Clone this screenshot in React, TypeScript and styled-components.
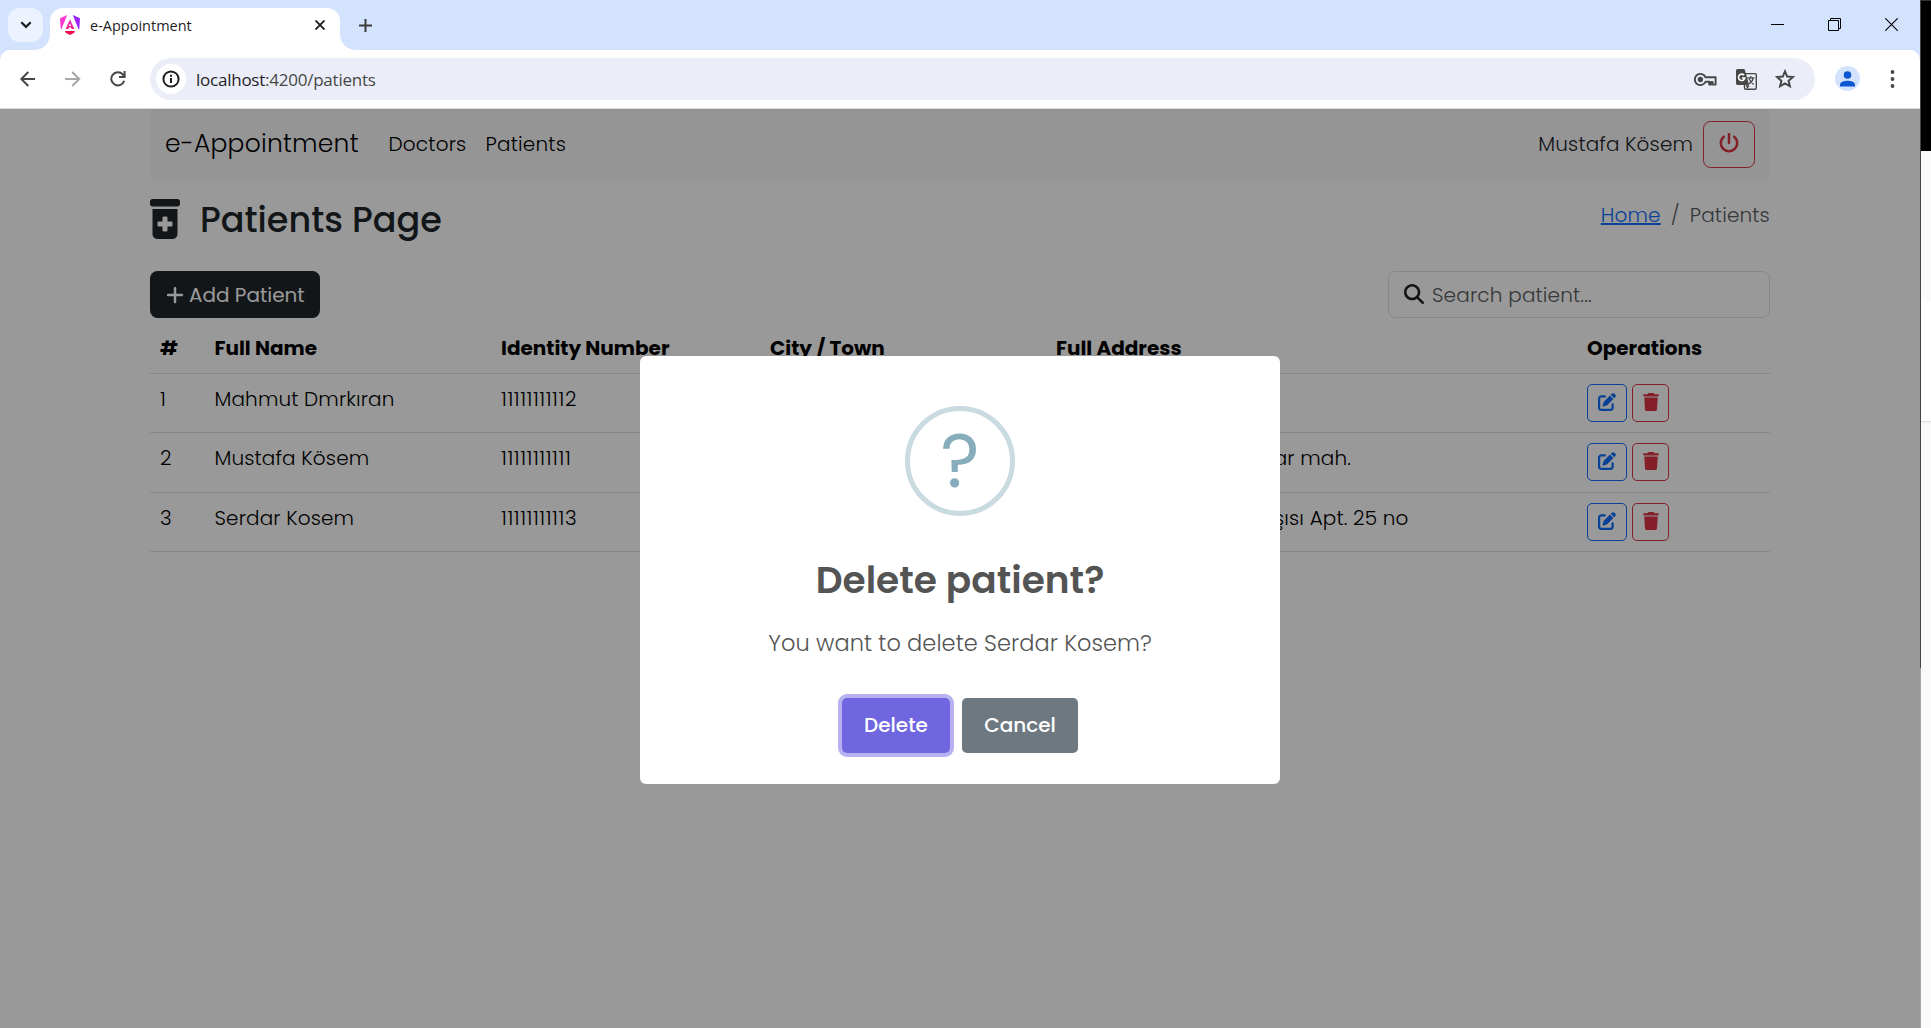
import React from 'react';
import styled, { createGlobalStyle } from 'styled-components';
import {
  FaMagnifyingGlass,
  FaPenToSquare,
  FaPlus,
  FaPowerOff,
  FaPrescriptionBottleMedical,
  FaTrash,
} from 'react-icons/fa6';

const GlobalStyle = createGlobalStyle`
  *, *::before, *::after { box-sizing: border-box; }
  body {
    margin: 0;
    overflow: hidden;
    font-family: Poppins, "Open Sans", sans-serif;
    font-size: 20px;
    font-weight: 300;
    line-height: 30px;
    color: #212529;
  }
`;

const Desktop = styled.div`
  display: flex;
  width: 1931px;
  height: 1028px;
  overflow: hidden;
  background: #fff;
`;

const Browser = styled.div`
  display: flex;
  flex-direction: column;
  width: 1920px;
  height: 100%;
`;

/* Window edge and the sliver of the window behind it */
const WindowEdge = styled.div`
  width: 1px;
  background: linear-gradient(#444 668px, #a4a4a4 668px);
`;
const Behind = styled.div`
  display: flex;
  flex-direction: column;
  width: 10px;
`;
const Strip = styled.div<{ $h?: number; $bg: string }>`
  ${(p) => (p.$h ? `height: ${p.$h}px;` : 'flex: 1;')}
  background: ${(p) => p.$bg};
`;

/* Tab strip */
const TabStrip = styled.div`
  display: flex;
  align-items: flex-start;
  height: 50px;
  padding-top: 8px;
  background: #d3e3fd;
`;
const TabSearch = styled.div`
  display: grid;
  place-items: center;
  width: 35px;
  height: 34px;
  margin-left: 8px;
  border-radius: 12px;
  background: #ecf3fe;
`;
const Tab = styled.div`
  position: relative;
  display: flex;
  align-items: center;
  width: 290px;
  height: 42px;
  margin-left: 7px;
  padding: 0 15px 8px 10px;
  border-radius: 13px 13px 0 0;
  background: #fff;
  &::before,
  &::after {
    content: '';
    position: absolute;
    bottom: 0;
    width: 15px;
    height: 15px;
  }
  &::before {
    left: -15px;
    background: radial-gradient(circle at 0 0, transparent 14.5px, #fff 15px);
  }
  &::after {
    right: -15px;
    background: radial-gradient(circle at 100% 0, transparent 14.5px, #fff 15px);
  }
`;
const TabTitle = styled.span`
  flex: 1;
  margin-left: 10px;
  padding-top: 1px;
  font: 400 14.5px/20px 'Open Sans', sans-serif;
  color: #1f1f1f;
`;
const NewTab = styled.div`
  display: grid;
  place-items: center;
  width: 20px;
  height: 34px;
  margin-left: 15px;
`;
const WindowControls = styled.div`
  display: flex;
  align-items: center;
  gap: 44px;
  height: 33px;
  margin-left: auto;
  padding-right: 22px;
`;

/* Address bar */
const ToolbarWrap = styled.div`
  height: 59px;
  background: #d3e3fd;
`;
const Toolbar = styled.div`
  display: flex;
  align-items: flex-start;
  height: 59px;
  padding: 8px 21px 0 20px;
  border-bottom: 1px solid #dadcdb;
  border-radius: 10px 10px 0 0;
  background: #fff;
`;
const NavIcons = styled.div`
  display: flex;
  align-items: center;
  gap: 29px;
  height: 42px;
  width: 130px;
`;
const Omnibox = styled.div`
  display: flex;
  align-items: center;
  width: 1665px;
  height: 42px;
  padding: 0 20px 0 6px;
  border-radius: 21px;
  background: #ebeef8;
`;
const SiteInfo = styled.div`
  display: grid;
  place-items: center;
  width: 30px;
  height: 30px;
  border-radius: 50%;
  background: #fff;
`;
const Url = styled.span`
  flex: 1;
  margin-left: 10px;
  padding-top: 1px;
  font: 400 17px/24px 'Open Sans', sans-serif;
  letter-spacing: -0.24px;
  color: #474747;
  b {
    font-weight: 400;
    color: #1f1f1f;
  }
`;
const OmniIcons = styled.div`
  display: flex;
  align-items: center;
  gap: 18.5px;
`;
const Profile = styled.div`
  display: grid;
  place-items: center;
  width: 25px;
  height: 25px;
  margin: 8px 0 0 20px;
  border-radius: 50%;
  background: #d3e3fd;
`;
const MenuDots = styled.div`
  display: flex;
  height: 42px;
  align-items: center;
  margin-left: auto;
`;

/* Page */
const Page = styled.main`
  position: relative;
  flex: 1;
  padding: 0 150px;
  background: #fff;
`;
const Navbar = styled.nav`
  display: flex;
  align-items: center;
  height: 70px;
  padding: 0 15px;
  background: #f8f9fa;
  color: #000;
`;
const Brand = styled.span`
  width: 223.5px;
  font-size: 25px;
  line-height: 36px;
  letter-spacing: 0.22px;
`;
const NavLink = styled.span`
  margin-right: 19px;
  letter-spacing: 0.2px;
`;
const UserName = styled.span`
  margin: 0 10px 0 auto;
  letter-spacing: 0.12px;
  color: #212529;
`;
const OutlineButton = styled.button<{ $color: string; $w: number; $small?: boolean }>`
  display: inline-flex;
  align-items: center;
  justify-content: center;
  width: ${(p) => p.$w}px;
  height: ${(p) => (p.$small ? 38 : 47)}px;
  padding: ${(p) => (p.$small ? '0 0 2px' : '0 0 2px')};
  border: 1px solid ${(p) => p.$color};
  border-radius: ${(p) => (p.$small ? 5 : 7.5)}px;
  background: transparent;
  color: ${(p) => p.$color};
  font-size: ${(p) => (p.$small ? 18 : 20)}px;
`;
const Heading = styled.div`
  display: flex;
  justify-content: space-between;
  margin-top: 19px;
  height: 73px;
`;
const Title = styled.h1`
  display: flex;
  gap: 20px;
  margin: 0;
  padding-top: 1px;
  font-size: 35px;
  font-weight: 500;
  line-height: 42px;
  svg {
    width: 30px;
    height: 40px;
  }
`;
const Breadcrumb = styled.div`
  display: flex;
  gap: 10px;
  margin-top: 2px;
  letter-spacing: 0.17px;
  color: #595c5f;
  a {
    color: #0d6efd;
    text-decoration: underline;
  }
`;
const Actions = styled.div`
  display: flex;
  justify-content: space-between;
  height: 47px;
  margin-bottom: 5px;
`;
const AddButton = styled.button`
  display: flex;
  align-items: center;
  gap: 4px;
  width: 170px;
  padding: 0 0 0 15px;
  border: 0;
  border-radius: 7.5px;
  background: #212529;
  color: #fff;
  font: 400 20px/30px Poppins, sans-serif;
`;
const SearchBox = styled.div`
  display: flex;
  align-items: center;
  gap: 8px;
  width: 382px;
  padding-left: 15px;
  border: 1px solid #dee2e6;
  border-radius: 7.5px;
  color: #595c5f;
  letter-spacing: 0.17px;
  svg {
    margin-bottom: 2px;
    color: #212529;
  }
`;
const Table = styled.table`
  width: 100%;
  table-layout: fixed;
  border-collapse: separate;
  border-spacing: 0;
  color: #000;
`;
const Th = styled.th<{ $w: number }>`
  width: ${(p) => p.$w}px;
  height: 51px;
  padding: 10px 10px 9px;
  border-bottom: 1px solid #dee2e6;
  text-align: left;
  vertical-align: top;
  font-weight: 700;
`;
const Tr = styled.tr<{ $h: number }>`
  height: ${(p) => p.$h}px;
`;
const Td = styled.td<{ $spacing?: number }>`
  padding: 10px 0 0 10px;
  border-bottom: 1px solid #dee2e6;
  vertical-align: top;
  letter-spacing: ${(p) => p.$spacing ?? 0.13}px;
  white-space: nowrap;
`;
const AddressEnd = styled.span<{ $width: number }>`
  display: block;
  width: ${(p) => p.$width}px;
  text-align: right;
`;
const RowButtons = styled.div`
  display: flex;
  gap: 5px;
`;

/* Confirmation dialog */
const Overlay = styled.div`
  position: absolute;
  inset: 0;
  display: flex;
  align-items: center;
  justify-content: center;
  padding-top: 3px;
  background: rgba(0, 0, 0, 0.4);
`;
const Dialog = styled.div`
  display: flex;
  flex-direction: column;
  align-items: center;
  width: 640px;
  height: 428px;
  padding-top: 50px;
  border-radius: 6px;
  background: #fff;
  color: #545454;
`;
const QuestionIcon = styled.div`
  display: flex;
  align-items: center;
  justify-content: center;
  width: 110px;
  height: 110px;
  border: 5px solid #c9dae1;
  border-radius: 50%;
  color: #87adbd;
  font-size: 75px;
  font-weight: 400;
  line-height: 100px;
`;
const DialogTitle = styled.h2`
  margin: 36px 0 0;
  font-size: 37.5px;
  font-weight: 600;
  line-height: 56px;
`;
const DialogText = styled.p`
  margin: 18px 0 38px;
  font-size: 22.5px;
  line-height: 34px;
  letter-spacing: 0.06px;
`;
const DialogButtons = styled.div`
  display: flex;
  gap: 12px;
`;
const DialogButton = styled.button<{ $bg: string; $w: number; $focus?: boolean }>`
  width: ${(p) => p.$w}px;
  height: 55px;
  padding: 0 0 2px;
  border: 0;
  border-radius: 5px;
  background: ${(p) => p.$bg};
  color: #fff;
  font: 500 20px/30px Poppins, sans-serif;
  box-shadow: ${(p) => (p.$focus ? '0 0 0 4px #b7b2ef' : 'none')};
`;

const AngularLogo = () => (
  <svg width="20" height="20" viewBox="0 0 20 20">
    <defs>
      <linearGradient id="ng" x1="0" y1="0" x2="0" y2="1">
        <stop offset="0" stopColor="#e22ad0" />
        <stop offset="1" stopColor="#f5207c" />
      </linearGradient>
    </defs>
    <path d="M0 3.2 7.2 0 1.4 14.2.7 14z" fill="#f938d3" />
    <path d="M20 3.2 12.8 0l5.800 14.200.7-.2z" fill="#9a22fa" />
    <path d="M10 4.200 14.300 14h-2.600l-.6-1.600H8.900L8.300 14H5.700zM10 8.400 8.900 11h2.200z" fill="url(#ng)" />
    <path d="M5 16h10l-.6 1.800L10 20l-4.400-2.200z" fill="#f40b4e" />
  </svg>
);

const patients = [
  { id: 1, name: 'Mahmut Dmrkıran', identity: '11111111112', address: '', width: 0, h: 59 },
  { id: 2, name: 'Mustafa Kösem', identity: '11111111111', address: 'ar mah.', width: 295, h: 60 },
  { id: 3, name: 'Serdar Kosem', identity: '11111111113', address: 'şısı Apt. 25 no', width: 352.5, h: 59 },
];

export default function App() {
  return (
    <Desktop>
      <GlobalStyle />
      <Browser>
        <TabStrip>
          <TabSearch>
            <svg width="12" height="8" viewBox="0 0 12 8" fill="none" stroke="#1f1f1f" strokeWidth="2.2">
              <path d="m1.3 1.3 4.7 4.6 4.7-4.6" />
            </svg>
          </TabSearch>
          <Tab>
            <AngularLogo />
            <TabTitle>e-Appointment</TabTitle>
            <svg width="10" height="10" viewBox="0 0 10 10" stroke="#1f1f1f" strokeWidth="1.9">
              <path d="m.5.5 9 9M9.5.5l-9 9" />
            </svg>
          </Tab>
          <NewTab>
            <svg width="13" height="13" viewBox="0 0 13 13" stroke="#3c3c3c" strokeWidth="2">
              <path d="M6.5 0v13M0 6.5h13" />
            </svg>
          </NewTab>
          <WindowControls>
            <svg width="13" height="13" viewBox="0 0 13 13" stroke="#000">
              <path d="M0 6.5h13" />
            </svg>
            <svg width="13" height="13" viewBox="0 0 13 13" fill="none" stroke="#000">
              <path d="M.5 2.500h10v10H.5zM2.500 2.500v-2h10v10h-2" />
            </svg>
            <svg width="13" height="13" viewBox="0 0 13 13" stroke="#000" strokeWidth="1.1">
              <path d="m.2.2 12.600 12.600M12.800.2.2 12.800" />
            </svg>
          </WindowControls>
        </TabStrip>

        <ToolbarWrap>
          <Toolbar>
            <NavIcons>
              <svg width="16" height="16" viewBox="0 0 16 16" fill="none" stroke="#474747" strokeWidth="2">
                <path d="M15 8H1.800M8.300 1 1.300 8l7 7" />
              </svg>
              <svg width="16" height="16" viewBox="0 0 16 16" fill="none" stroke="#a8a8a8" strokeWidth="2">
                <path d="M0 8h13.700M7.200 1l7 7-7 7" />
              </svg>
              <svg width="16" height="16" viewBox="0 0 16 16" fill="none" stroke="#474747" strokeWidth="2">
                <path d="M14.200 9.800A6.600 6.600 0 1 1 12.700 3.300L14.500 5.300" />
                <path d="M14.600 0v6H9" />
              </svg>
            </NavIcons>
            <Omnibox>
              <SiteInfo>
                <svg width="18" height="18" viewBox="0 0 18 18" fill="none" stroke="#1f1f1f" strokeWidth="2">
                  <circle cx="9" cy="9" r="7.600" />
                  <path d="M9 8v5M9 4.800v2" />
                </svg>
              </SiteInfo>
              <Url>
                <b>localhost</b>:4200/patients
              </Url>
              <OmniIcons>
                <svg width="23" height="15" viewBox="0 0 23 15" fill="none" stroke="#474747" strokeWidth="1.900">
                  <path d="M11.600 5.300A5.600 5.600 0 1 0 11.600 9.700H15.200V12.600h1.800v-2.600h1.600v2.600h3V5.300z" strokeLinejoin="round" />
                  <circle cx="6.400" cy="7.500" r="2.700" fill="#474747" stroke="none" />
                </svg>
                <svg width="21" height="21" viewBox="0 0 21 21">
                  <rect x="8.500" y="4.600" width="11.800" height="15.600" rx="1.200" fill="none" stroke="#474747" strokeWidth="1.400" />
                  <path d="M1.500 0h7l1 3 3.600 13H1.500A1.500 1.500 0 0 1 0 14.600V1.500A1.500 1.500 0 0 1 1.500 0z" fill="#474747" />
                  <path d="M9.500 16.200 11.600 20l2-3.800z" fill="#474747" />
                  <path d="M8.100 6.200A3.200 3.200 0 1 0 8.800 9H5.900" fill="none" stroke="#fff" strokeWidth="1.600" />
                  <path d="M11.500 8.800h7M14.800 7v1.800M17.200 9c-.6 2.800-2.400 4.800-4.200 5.800M13 9.500c.8 2.400 2.600 4.400 4.600 6" fill="none" stroke="#474747" strokeWidth="1.200" />
                </svg>
                <svg width="20" height="20" viewBox="0 0 20 20" fill="none" stroke="#474747" strokeWidth="2">
                  <path d="m10 2.400 2.200 5.200 5.700.5-4.300 3.700 1.300 5.500L10 14.400l-4.900 2.900 1.300-5.500L2.100 8.100l5.700-.5z" />
                </svg>
              </OmniIcons>
            </Omnibox>
            <Profile>
              <svg width="15" height="16" viewBox="0 0 15 16" fill="#0b57d0">
                <circle cx="7.500" cy="4" r="3.800" />
                <path d="M0 15.500v-2C0 11 3.800 9.700 7.500 9.700S15 11 15 13.500v2z" />
              </svg>
            </Profile>
            <MenuDots>
              <svg width="12" height="18" viewBox="0 0 12 18" fill="#474747">
                <circle cx="5.500" cy="2" r="1.900" />
                <circle cx="5.500" cy="9" r="1.900" />
                <circle cx="5.500" cy="16" r="1.900" />
              </svg>
            </MenuDots>
          </Toolbar>
        </ToolbarWrap>

        <Page>
          <Navbar>
            <Brand>e-Appointment</Brand>
            <NavLink>Doctors</NavLink>
            <NavLink>Patients</NavLink>
            <UserName>Mustafa Kösem</UserName>
            <OutlineButton $color="#dc3545" $w={52}>
              <FaPowerOff />
            </OutlineButton>
          </Navbar>

          <Heading>
            <Title>
              <FaPrescriptionBottleMedical />
              Patients Page
            </Title>
            <Breadcrumb>
              <a>Home</a>
              <span>/</span>
              <span>Patients</span>
            </Breadcrumb>
          </Heading>

          <Actions>
            <AddButton>
              <FaPlus size={20} />
              Add Patient
            </AddButton>
            <SearchBox>
              <FaMagnifyingGlass size={20} />
              Search patient...
            </SearchBox>
          </Actions>

          <Table>
            <thead>
              <tr>
                <Th $w={54.5}>#</Th>
                <Th $w={286.5}>Full Name</Th>
                <Th $w={269}>Identity Number</Th>
                <Th $w={286}>City / Town</Th>
                <Th $w={531}>Full Address</Th>
                <Th $w={193}>Operations</Th>
              </tr>
            </thead>
            <tbody>
              {patients.map((p) => (
                <Tr key={p.id} $h={p.h}>
                  <Td>{p.id}</Td>
                  <Td>{p.name}</Td>
                  <Td $spacing={0.55}>{p.identity}</Td>
                  <Td />
                  <Td>
                    <AddressEnd $width={p.width}>{p.address}</AddressEnd>
                  </Td>
                  <Td>
                    <RowButtons>
                      <OutlineButton $small $color="#0d6efd" $w={40}>
                        <FaPenToSquare />
                      </OutlineButton>
                      <OutlineButton $small $color="#dc3545" $w={37}>
                        <FaTrash />
                      </OutlineButton>
                    </RowButtons>
                  </Td>
                </Tr>
              ))}
            </tbody>
          </Table>

          <Overlay>
            <Dialog>
              <QuestionIcon>?</QuestionIcon>
              <DialogTitle>Delete patient?</DialogTitle>
              <DialogText>You want to delete Serdar Kosem?</DialogText>
              <DialogButtons>
                <DialogButton $bg="#7066e0" $w={108} $focus>
                  Delete
                </DialogButton>
                <DialogButton $bg="#6e7881" $w={116}>
                  Cancel
                </DialogButton>
              </DialogButtons>
            </Dialog>
          </Overlay>
        </Page>
      </Browser>
      <WindowEdge />
      <Behind>
        <Strip $h={151} $bg="linear-gradient(#333 1px, #000 1px)" />
        <Strip $h={150} $bg="#fafafa" />
        <Strip $h={120} $bg="#fff" />
        <Strip $bg="linear-gradient(#e0e0e0 1px, #f2f2f2 1px, #fafafa 4px)" />
      </Behind>
    </Desktop>
  );
}
